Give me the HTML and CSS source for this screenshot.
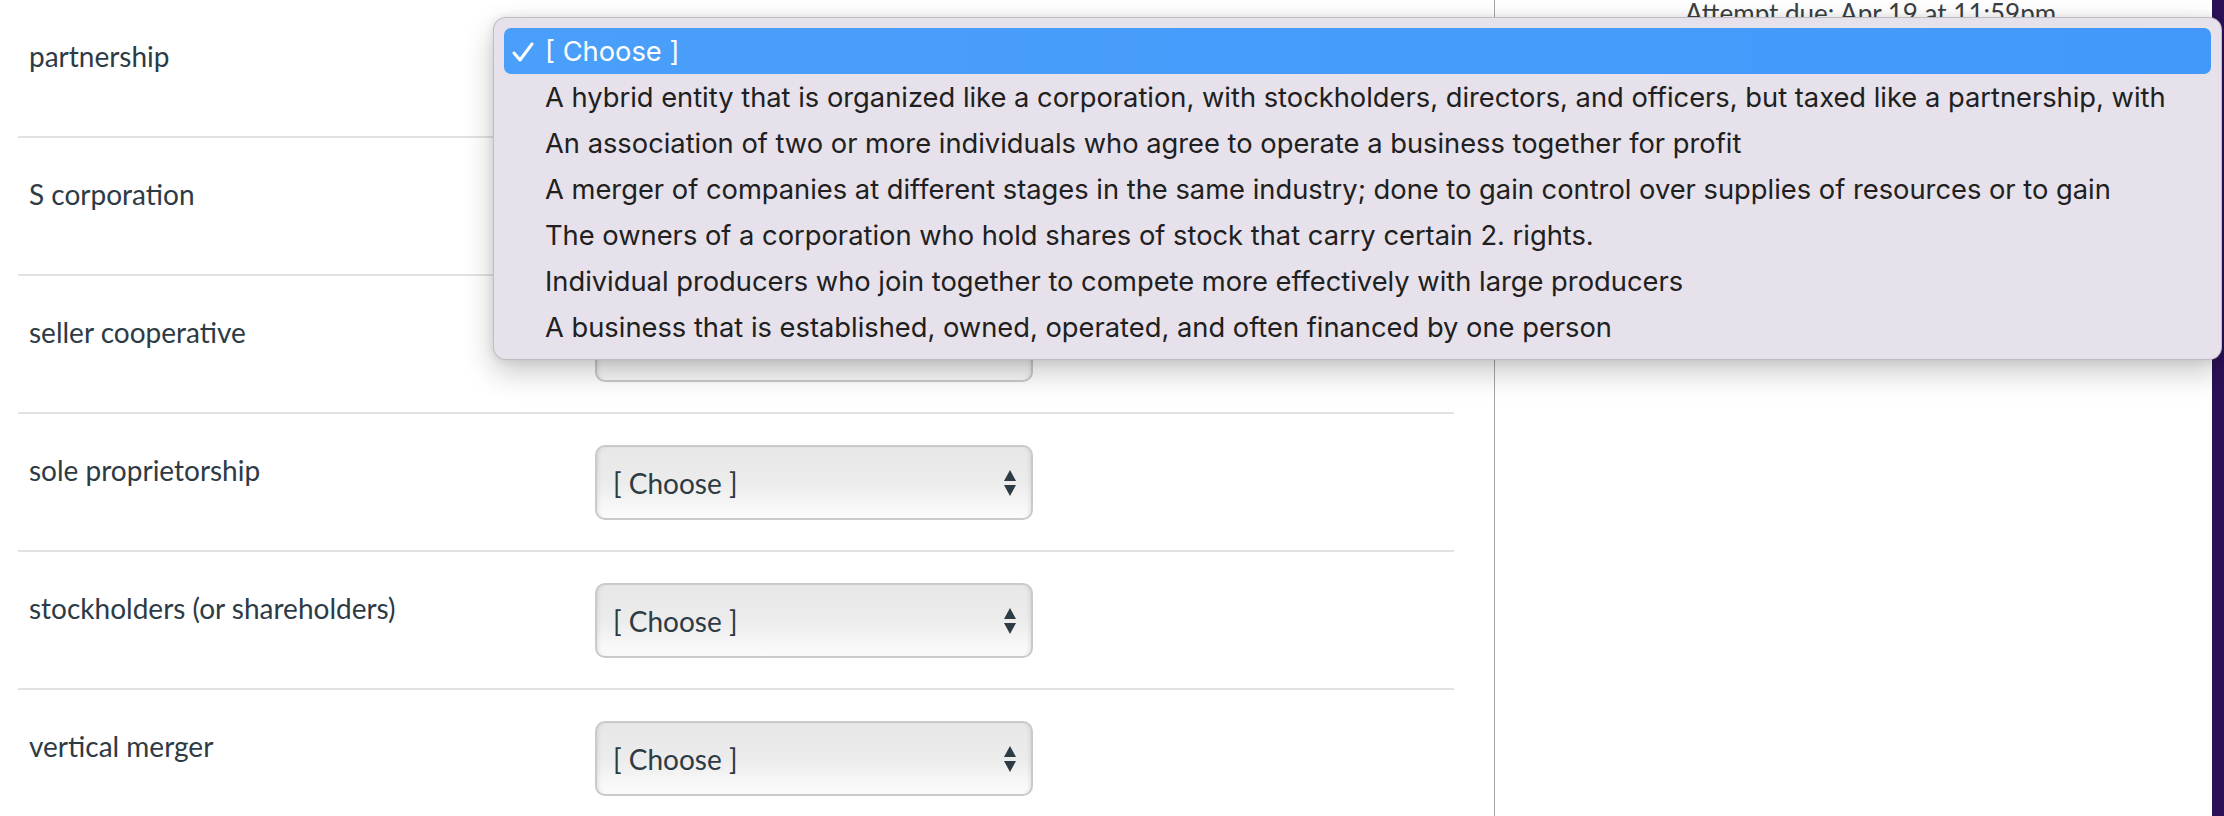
FILE: index.html
```html
<!DOCTYPE html>
<html lang="en">
<head>
<meta charset="utf-8">
<title>Matching quiz</title>
<link rel="stylesheet" href="styles.css">
</head>
<body>
<div class="page">
  <main class="main">
    <div class="rows">
      <div class="row">
        <div class="label">partnership</div>
        <div class="select"><span class="select-text">[ Choose ]</span>
          <svg class="arrows" width="12" height="26" viewBox="0 0 12 26"><polygon points="6,0 12,11 0,11" fill="#2d3b45"/><polygon points="0,15 12,15 6,26" fill="#2d3b45"/></svg>
        </div>
      </div>
      <div class="row">
        <div class="label">S corporation</div>
        <div class="select"><span class="select-text">[ Choose ]</span>
          <svg class="arrows" width="12" height="26" viewBox="0 0 12 26"><polygon points="6,0 12,11 0,11" fill="#2d3b45"/><polygon points="0,15 12,15 6,26" fill="#2d3b45"/></svg>
        </div>
      </div>
      <div class="row">
        <div class="label">seller cooperative</div>
        <div class="select"><span class="select-text">[ Choose ]</span>
          <svg class="arrows" width="12" height="26" viewBox="0 0 12 26"><polygon points="6,0 12,11 0,11" fill="#2d3b45"/><polygon points="0,15 12,15 6,26" fill="#2d3b45"/></svg>
        </div>
      </div>
      <div class="row">
        <div class="label">sole proprietorship</div>
        <div class="select"><span class="select-text">[ Choose ]</span>
          <svg class="arrows" width="12" height="26" viewBox="0 0 12 26"><polygon points="6,0 12,11 0,11" fill="#2d3b45"/><polygon points="0,15 12,15 6,26" fill="#2d3b45"/></svg>
        </div>
      </div>
      <div class="row">
        <div class="label">stockholders (or shareholders)</div>
        <div class="select"><span class="select-text">[ Choose ]</span>
          <svg class="arrows" width="12" height="26" viewBox="0 0 12 26"><polygon points="6,0 12,11 0,11" fill="#2d3b45"/><polygon points="0,15 12,15 6,26" fill="#2d3b45"/></svg>
        </div>
      </div>
      <div class="row">
        <div class="label">vertical merger</div>
        <div class="select"><span class="select-text">[ Choose ]</span>
          <svg class="arrows" width="12" height="26" viewBox="0 0 12 26"><polygon points="6,0 12,11 0,11" fill="#2d3b45"/><polygon points="0,15 12,15 6,26" fill="#2d3b45"/></svg>
        </div>
      </div>
    </div>
  </main>
  <aside class="sidebar">
    <div class="due">Attempt due: Apr 19 at 11:59pm</div>
  </aside>
  <div class="edge"></div>

  <ul class="popup">
    <li class="opt selected"><svg class="check" width="22" height="20" viewBox="0 0 22 20"><polyline points="2,11 8,18 20,2" fill="none" stroke="#ffffff" stroke-width="3" stroke-linecap="round" stroke-linejoin="round"/></svg>[ Choose ]</li>
    <li class="opt">A hybrid entity that is organized like a corporation, with stockholders, directors, and officers, but taxed like a partnership, with</li>
    <li class="opt">An association of two or more individuals who agree to operate a business together for profit</li>
    <li class="opt">A merger of companies at different stages in the same industry; done to gain control over supplies of resources or to gain</li>
    <li class="opt">The owners of a corporation who hold shares of stock that carry certain 2. rights.</li>
    <li class="opt">Individual producers who join together to compete more effectively with large producers</li>
    <li class="opt">A business that is established, owned, operated, and often financed by one person</li>
  </ul>
</div>
</body>
</html>
```

FILE: styles.css
```css
html, body {
  margin: 0;
  padding: 0;
  background: #ffffff;
}

.page {
  position: relative;
  display: flex;
  width: 2224px;
  height: 816px;
  overflow: hidden;
  font-family: Lato, "Open Sans", sans-serif;
  color: #2d3b45;
}

.main {
  width: 1494px;
  flex: none;
  padding-left: 18px;
  box-sizing: border-box;
}

.rows {
  width: 1436px;
  display: flex;
  flex-direction: column;
}

.row {
  display: flex;
  align-items: center;
  height: 136px;
  border-bottom: 2px solid #e2e2e2;
  flex: none;
}

.label {
  align-self: flex-start;
  width: 577px;
  flex: none;
  box-sizing: border-box;
  padding-left: 11px;
  padding-top: 40px;
  font-size: 28px;
  line-height: 32px;
}

.select {
  width: 438px;
  height: 75px;
  box-sizing: border-box;
  border: 2px solid #cacaca;
  border-radius: 10px;
  background: linear-gradient(to bottom, #e7e7e7 0%, #ececec 50%, #f6f6f6 80%, #fbfbfb 100%);
  box-shadow: inset 4px 0 4px -3px rgba(0,0,0,0.10), inset -4px 0 4px -3px rgba(0,0,0,0.10);
  display: flex;
  align-items: center;
  justify-content: space-between;
  padding: 2px 15px 0 16px;
}

.select-text {
  font-size: 28px;
  color: #2d3b45;
}

.arrows {
  display: block;
  flex: none;
}

.sidebar {
  flex: 1;
  border-left: 1px solid #a6a6a6;
  padding-left: 190px;
}

.due {
  font-size: 26px;
  line-height: 27px;
  color: #3a3f44;
  white-space: nowrap;
}

.edge {
  width: 12px;
  flex: none;
  background: #2b1158;
}

.popup {
  position: absolute;
  left: 493px;
  top: 17px;
  width: 1729px;
  height: 343px;
  margin: 0;
  padding: 10px 10px 10px 10px;
  box-sizing: border-box;
  list-style: none;
  background: #e6e1ea;
  border: 1px solid rgba(0,0,0,0.16);
  border-radius: 13px;
  box-shadow: 0 12px 30px rgba(0,0,0,0.22), 0 0 10px rgba(0,0,0,0.10);
  font-family: Inter, "Liberation Sans", sans-serif;
  font-size: 27.3px;
  color: #202020;
}

.opt {
  height: 46px;
  line-height: 48px;
  padding-left: 41px;
  position: relative;
  white-space: nowrap;
}

.opt.selected {
  background: linear-gradient(to right, #4a9ffa, #4399fb);
  color: #ffffff;
  border-radius: 7px;
}

.check {
  position: absolute;
  left: 8px;
  top: 14px;
}
```
